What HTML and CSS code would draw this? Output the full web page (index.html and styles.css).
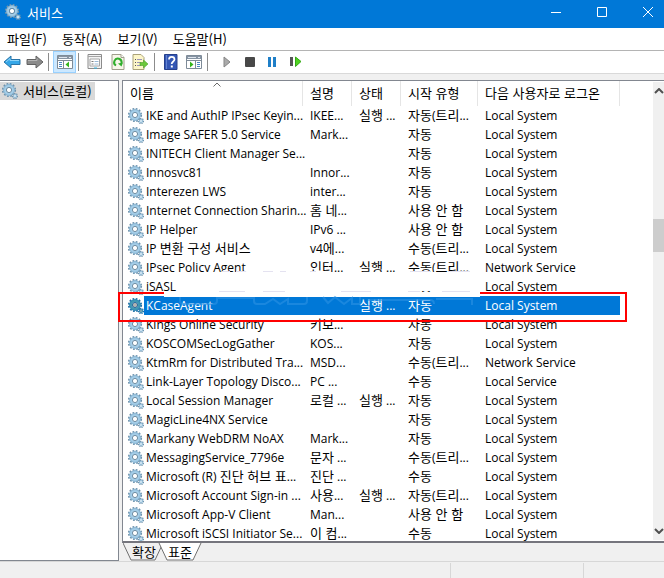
FILE: index.html
```
<!DOCTYPE html>
<html lang="ko">
<head>
  <meta charset="UTF-8" />
  <meta name="viewport" content="width=device-width,initial-scale=1" />
  <title>서비스</title>
  <link rel="stylesheet" href="styles.css">
</head>
<body>

  <!-- Shared gear icon -->
  <svg class="defs" aria-hidden="true">
    <symbol id="gear" viewBox="0 0 16 16">
      <circle cx="7" cy="7" r="6" fill="none" stroke="#6f93ad" stroke-width="2.2" stroke-dasharray="1.7 1.44"/>
      <circle cx="7" cy="7" r="4.2" fill="none" stroke="#a3cde8" stroke-width="3"/>
      <circle cx="7" cy="7" r="5.4" fill="none" stroke="#83afcd" stroke-width=".8"/>
      <circle cx="7" cy="7" r="2.6" fill="#fff" stroke="#5e8099" stroke-width=".9"/>
      <circle cx="13" cy="13" r="2.4" fill="none" stroke="#6f93ad" stroke-width="1.5" stroke-dasharray="1.1 .8"/>
      <circle cx="13" cy="13" r="1.5" fill="#e8f4fb" stroke="#8fbad6" stroke-width="1.2"/>
    </symbol>
  </svg>

  <div class="window">
    <header class="titlebar">
      <svg class="icon"><use href="#gear"/></svg>
      <h1>서비스</h1>
      <div class="controls">
        <button aria-label="최소화"><svg width="10" height="10"><path d="M0 5.5h10"/></svg></button>
        <button aria-label="최대화"><svg width="10" height="10"><path d="M.5.5h9v9h-9z"/></svg></button>
        <button aria-label="닫기"><svg width="10" height="10"><path d="M0 0l10 10M10 0L0 10"/></svg></button>
      </div>
    </header>

    <nav class="menubar">
      <button>파일(F)</button>
      <button>동작(A)</button>
      <button>보기(V)</button>
      <button>도움말(H)</button>
    </nav>

    <div class="toolbar">
      <button aria-label="뒤로"><svg width="18" height="14" viewBox="0 0 18 14"><path d="M1 7l7-6v3.500h9v5H8V13z" fill="#35a7e8" stroke="#2874a8"/><path d="M3 7l4-3.500V5.500h9" fill="none" stroke="#8ed4f8"/></svg></button>
      <button aria-label="앞으로"><svg width="18" height="14" viewBox="0 0 18 14"><path d="M17 7l-7-6v3.500H1v5h9V13z" fill="#8b8b8b" stroke="#626262"/><path d="M2 5.500h9V3.500" fill="none" stroke="#b5b5b5"/></svg></button>
      <i class="sep"></i>
      <button class="active" aria-label="콘솔 트리 표시"><svg width="16" height="15" viewBox="0 0 16 15"><path d="M.5.5h15v13H.5z" fill="#fff" stroke="#7e8b98"/><path d="M1 1h14v3H1z" fill="#8794a3"/><path d="M2 2.500h8M12 2.500h2" stroke="#dfe6ee"/><path d="M1 5.500h14M6.500 5v8" stroke="#7e8b98"/><path d="M2 7.500h3M2 9.500h3M2 11.500h3" stroke="#4a87c4"/><path d="M12 6.500v6L8.500 9.500z" fill="#35b51c"/></svg></button>
      <i class="sep"></i>
      <button aria-label="속성"><svg width="16" height="16" viewBox="0 0 16 16"><path d="M1 .5h13.500v14H1z" fill="#f3f3f3" stroke="#8b8b8b"/><path d="M1 2.500h13" stroke="#a5a5a5"/><path d="M3 5h9.500v7H3z" fill="#fff" stroke="#a5a5a5"/><path d="M4.500 7.500h2M4.500 10h2" stroke="#777"/><path d="M7.500 7.500h4M7.500 10h4" stroke="#9ab8d4"/><path d="M7 14h3" stroke="#2fb7e8"/></svg></button>
      <button aria-label="새로 고침"><svg width="14" height="16" viewBox="0 0 14 16"><path d="M1 .5h9l3 3v12H1z" fill="#f8f7ea" stroke="#a09e8c"/><path d="M10 .5v3h3" fill="#fff" stroke="#a09e8c"/><path d="M5 11.500A3.700 3.700 0 1 1 10.500 9" fill="none" stroke="#2fae2c" stroke-width="2"/><path d="M7 9.500l5-1-1.500 4z" fill="#2fae2c"/></svg></button>
      <button aria-label="목록 내보내기"><svg width="17" height="16" viewBox="0 0 17 16"><path d="M1 .5h8l3 3v12H1z" fill="#fdf6c9" stroke="#aaa27a"/><path d="M3 5.500h1M3 8.500h1M3 11.500h1" stroke="#555"/><path d="M5 5.500h5M5 8.500h4M5 11.500h4" stroke="#9a94b8"/><path d="M8 8.500h3.500V6l4.500 4-4.500 4v-2.500H8z" fill="#6dc93a" stroke="#4ba128" stroke-width=".6"/></svg></button>
      <i class="sep"></i>
      <button aria-label="도움말"><svg width="14" height="16" viewBox="0 0 14 16"><path d="M.5.5h12.500v15H.5z" fill="#3457b5" stroke="#26408c"/><path d="M2.500 1v14" stroke="#6484d2"/><path d="M5 5.500C5 2 10.500 2 10.500 5.500 10.500 7.500 7.700 7.500 7.700 10" fill="none" stroke="#fff" stroke-width="1.700"/><path d="M6.800 11.500h2v2h-2z" fill="#fff"/></svg></button>
      <button aria-label="작업 창 표시"><svg width="16" height="15" viewBox="0 0 16 15"><path d="M.5.5h15v13H.5z" fill="#fff" stroke="#7e8b98"/><path d="M1 1h14v3H1z" fill="#8794a3"/><path d="M2 2.500h8M12 2.500h2" stroke="#dfe6ee"/><path d="M1 5.500h14M9.500 5v8" stroke="#7e8b98"/><path d="M11 7.500h3M11 9.500h3M11 11.500h3" stroke="#4a87c4"/><path d="M4 6.500v6l3.500-3z" fill="#35b51c"/></svg></button>
      <i class="sep"></i>
      <div class="playback">
        <button aria-label="서비스 시작"><svg width="8" height="12" viewBox="0 0 8 12"><path d="M1 1l6 5-6 5z" fill="#aaa" stroke="#858585"/></svg></button>
        <button aria-label="서비스 중지"><svg width="10" height="10"><rect width="10" height="10" rx="1" fill="#484848"/></svg></button>
        <button aria-label="서비스 일시 중지"><svg width="9" height="10"><path d="M0 0h3v10H0zM5 0h3v10H5z" fill="#1f7fc8"/></svg></button>
        <button aria-label="서비스 다시 시작"><svg width="12" height="12" viewBox="0 0 12 12"><path d="M0 1h3v9H0z" fill="#555"/><path d="M5.500 1l5.500 4.500-5.500 5z" fill="#4fd320" stroke="#35a817"/></svg></button>
      </div>
    </div>

    <main class="workspace">
      <aside class="tree">
        <a href="#" class="node"><svg class="icon"><use href="#gear"/></svg><span>서비스(로컬)</span></a>
      </aside>

      <section class="result">
        <div class="list">
          <div class="rows">
            <table>
              <colgroup><col class="c-name"><col class="c-desc"><col class="c-state"><col class="c-start"><col class="c-logon"><col></colgroup>
              <thead>
                <tr><th>이름<svg class="caret" width="8" height="5"><path d="M.5 4.500L4 1l3.500 3.500"/></svg></th><th>설명</th><th>상태</th><th>시작 유형</th><th>다음 사용자로 로그온</th><td></td></tr>
              </thead>
              <tbody id="services"></tbody>
            </table>
          </div>
          <div class="scrollbar">
            <svg width="10" height="6"><path d="M1 5l4-4 4 4"/></svg>
            <div class="thumb"></div>
            <svg width="10" height="6"><path d="M1 1l4 4 4-4"/></svg>
          </div>
        </div>
        <div class="tabs">
          <svg width="80" height="18" aria-hidden="true">
            <path d="M0 0l8 17h24l8-17" fill="#f0f0f0" stroke="#707070"/>
            <path d="M36 0l8 17h26l8-17" fill="#fff" stroke="#707070"/>
          </svg>
          <button>확장</button>
          <button>표준</button>
        </div>
      </section>

      <!-- Highlight box with the faded stamp behind it -->
      <svg class="marker" width="510" height="58" viewBox="0 0 510 58" aria-hidden="true">
        <path d="M1 55V27h507v28z" fill="none" stroke="#f00" stroke-width="2"/>
        <path d="M62 6h300v19H62zM46 26h316v5H46z" fill="#fff"/>
        <path d="M104 5.500h8M118 5.500h10M145 5.500h10M162 5.500h6M192 5.500h6M292 5.500h20M330 5.500h22M101 25.500h26M145 25.500h22M223 25.500h30M290 25.500h12M324 25.500h28" stroke="#e4e2f0"/>
        <path d="M62 31v4q0 3 3 3h31q3 0 3-3v-3h37v3q0 3 3 3h8l8-5 7 5 8-5v5h16q3 0 3-3v-4M205 31l5 6 7-6 9 7 8-6v6h8v-7M250 34h62q4 0 4 4M318 33h36v6" fill="none" stroke="#2b91e3" stroke-width="2" opacity=".6"/>
      </svg>
    </main>

    <footer class="statusbar"><span></span><span></span><span></span></footer>
  </div>

  <script>
    // name, description, state, start type, log on as
    const AUTO = '자동', MANUAL = '수동', OFF = '사용 안 함', RUN = '실행 ...';
    const AUTO_T = '자동(트리...', MANUAL_T = '수동(트리...';
    const LS = 'Local System', NS = 'Network Service';
    const SERVICES = [
      ['IKE and AuthIP IPsec Keyin...', 'IKEE...', RUN, AUTO_T, LS],
      ['Image SAFER 5.0 Service', 'Mark...', '', AUTO, LS],
      ['INITECH Client Manager Se...', '', '', AUTO, LS],
      ['Innosvc81', 'Innor...', '', AUTO, LS],
      ['Interezen LWS', 'inter...', '', AUTO, LS],
      ['Internet Connection Sharin...', '홈 네...', '', OFF, LS],
      ['IP Helper', 'IPv6 ...', '', OFF, LS],
      ['IP 변환 구성 서비스', 'v4에...', '', MANUAL_T, LS],
      ['IPsec Policy Agent', '인터...', RUN, MANUAL_T, NS],
      ['iSASL', '', '', AUTO, LS],
      ['KCaseAgent', '', RUN, AUTO, LS],
      ['Kings Online Security', '키보...', '', AUTO, LS],
      ['KOSCOMSecLogGather', 'KOS...', '', AUTO, LS],
      ['KtmRm for Distributed Tra...', 'MSD...', '', MANUAL_T, NS],
      ['Link-Layer Topology Disco...', 'PC ...', '', MANUAL, 'Local Service'],
      ['Local Session Manager', '로컬 ...', RUN, AUTO, LS],
      ['MagicLine4NX Service', '', '', AUTO, LS],
      ['Markany WebDRM NoAX', 'Mark...', '', AUTO, LS],
      ['MessagingService_7796e', '문자 ...', '', MANUAL_T, LS],
      ['Microsoft (R) 진단 허브 표...', '진단 ...', '', MANUAL, LS],
      ['Microsoft Account Sign-in ...', '사용...', RUN, AUTO_T, LS],
      ['Microsoft App-V Client', 'Man...', '', OFF, LS],
      ['Microsoft iSCSI Initiator Se...', '이 컴...', '', MANUAL, LS]
    ];
    // Hangul runs are set one size larger than the Latin text
    const mark = t => t.replace(/[가-힣]+( [가-힣]+)*/g, '<b>$&</b>');

    document.getElementById('services').innerHTML = SERVICES.map(([name, ...rest]) =>
      `<tr${name === 'KCaseAgent' ? ' class="selected"' : ''}>
        <td><div class="name"><svg class="icon"><use href="#gear"/></svg><span>${mark(name)}</span></div></td>
        ${rest.map(t => `<td>${mark(t)}</td>`).join('')}
      </tr>`).join('');
  </script>
</body>
</html>
```
FILE: styles.css
```
* { box-sizing: border-box; }

body {
  margin: 0;
  font-family: "Noto Sans CJK KR", sans-serif;
  font-size: 13px;
  line-height: 19px;
  color: #000;
  background: #f0f0f0;
}
button { font: inherit; color: inherit; background: none; border: 0; padding: 0; }
svg { display: block; flex: none; }
.defs { position: absolute; width: 0; height: 0; }
.icon { width: 16px; height: 16px; }

.window { display: flex; flex-direction: column; height: 100vh; overflow: hidden; }

/* Title bar */
.titlebar {
  display: flex; align-items: center;
  height: 28px; flex: none;
  padding: 0 0 4px 5px;
  overflow: hidden;
  color: #fff; background: #0078d7;
}
.titlebar h1 { margin: 0 auto 0 6px; font-size: 13px; font-weight: 400; }
.controls { display: flex; margin-right: -7px; height: 24px; }
.controls button { width: 46px; display: grid; place-items: center; }
.controls path { fill: none; stroke: #fff; }

/* Menu and toolbar */
.menubar {
  display: flex; gap: 15px; align-items: center;
  height: 23px; flex: none;
  padding: 0 0 2px 7px;
  background: #fff;
  border-bottom: 1px solid #b4b4b4;
}
.toolbar {
  display: flex; align-items: center;
  height: 23px; flex: none;
  background: #fff;
  border-bottom: 1px solid #d9d9d9;
}
.toolbar button { width: 23px; height: 22px; display: grid; place-items: center; }
.toolbar .active { background: #cce8ff; border: 1px solid #99d1ff; }
.sep { width: 1px; height: 18px; margin: 0 4px 0 2px; background: #8c8c8c; }
.playback { display: flex; margin-left: 3px; }

/* Tree and list */
.workspace {
  position: relative;
  display: flex; gap: 3px;
  flex: 1; min-height: 0;
  padding-top: 6px;
}
.tree {
  width: 119px; flex: none;
  background: #fff;
  border: 1px solid #828790; border-left: 0;
}
.node {
  display: flex; align-items: center; gap: 5px;
  width: 95px; height: 18px; margin-top: 1px; padding-left: 2px;
  color: #000; background: #d9d9d9;
  text-decoration: none; white-space: nowrap;
}
.node span { padding-bottom: 2px; }
.result { display: flex; flex-direction: column; flex: 1; min-width: 0; }
.list {
  display: flex; flex: 1; min-height: 0;
  background: #fff;
  border: 1px solid #828790; border-right: 0;
  border-bottom: 2px solid #75757d;
}
.rows { flex: 1; min-width: 0; overflow: hidden; }

table { width: 100%; table-layout: fixed; border-collapse: separate; border-spacing: 0; }
.c-name { width: 180px; }
.c-desc, .c-state { width: 49px; }
.c-start { width: 77px; }
.c-logon { width: 142px; }
th, td { padding: 0 0 0 7px; text-align: left; font-weight: 400; white-space: nowrap; }
th {
  position: relative;
  height: 25px;
  padding-bottom: 2px;
  border-right: 1px solid #e5e5e5;
}
.caret { position: absolute; top: 1px; left: 50%; }
.caret path { fill: none; stroke: #6b6b6b; }
tbody td {
  height: 19px;
  font-family: "Open Sans", "Noto Sans CJK KR", sans-serif;
  font-size: 12px;
}
tbody b {
  font-family: "Noto Sans CJK KR", sans-serif;
  font-size: 13px; font-weight: 400;
  line-height: 1;
}
tbody td:first-child { padding-left: 5px; }
.name { display: flex; align-items: center; }
.name span { flex: 1; height: 19px; padding-left: 2px; }
.selected td:not(:first-child), .selected .name span { color: #fff; background: #0078d7; }
.selected .icon { filter: saturate(3) brightness(.7); }

/* Scrollbar */
.scrollbar {
  display: flex; flex-direction: column; align-items: center;
  width: 11px; flex: none;
  margin: 1px 0;
  padding: 6px 0;
  overflow: hidden;
  background: #f0f0f0;
}
.scrollbar path { fill: none; stroke: #505050; stroke-width: 2; }
.thumb { width: 11px; height: 33px; margin: 125px 0 auto; background: #cdcdcd; }

/* Bottom tabs */
.tabs { position: relative; display: flex; height: 18px; flex: none; padding-left: 4px; }
.tabs svg { position: absolute; left: 1px; top: 0; }
.tabs button { position: relative; width: 36px; line-height: 15px; padding-bottom: 2px; }

.marker { position: absolute; left: 118px; top: 192px; }

.statusbar {
  display: flex;
  height: 17px; flex: none;
  padding-top: 1px;
  border-top: 1px solid #d7d7d7;
}
.statusbar span { width: 133px; border-right: 1px solid #d7d7d7; }
.statusbar span:first-child { flex: 1; }
.statusbar span:last-child { width: 80px; border: 0; }
```
